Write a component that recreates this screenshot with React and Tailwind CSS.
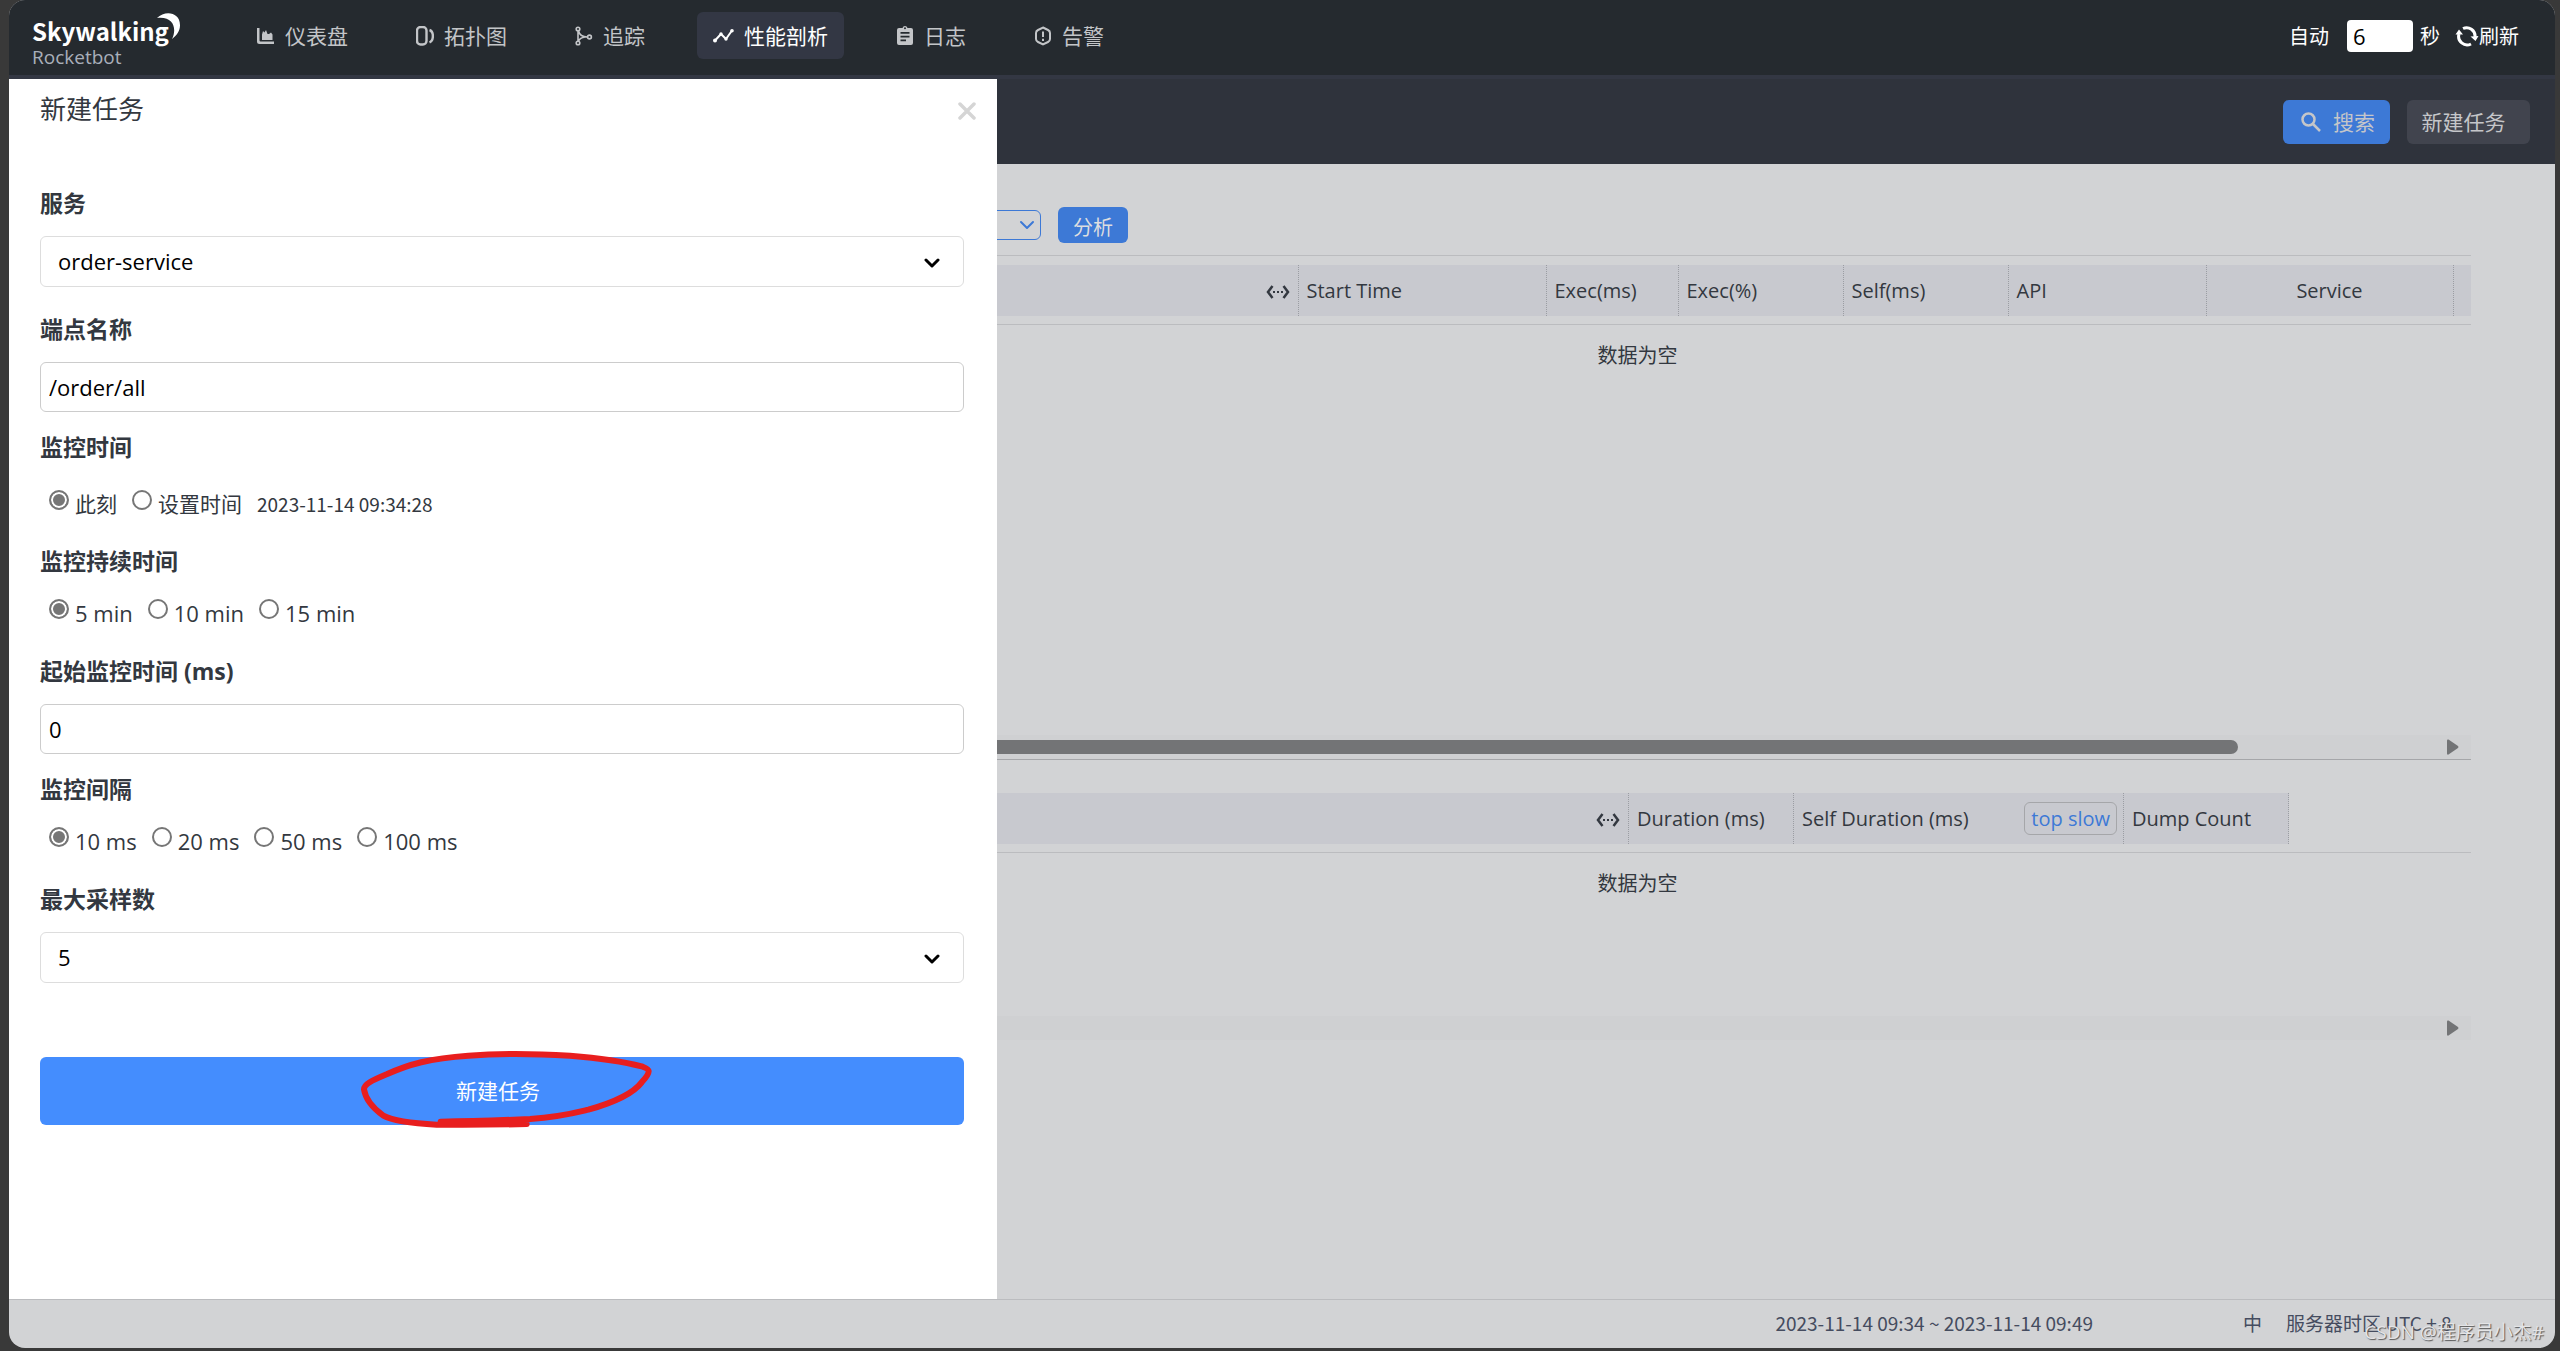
import React from "react";

function NavIcon({ name }) {
  const common = { viewBox: "0 0 18 20", className: "h-5 w-[18px] shrink-0", fill: "none", stroke: "currentColor", strokeWidth: 2 };
  switch (name) {
    case "dashboard":
      return (
        <svg {...common} fill="currentColor" stroke="none">
          <path d="M0 2h2.5v12.500q0 1 1 1H17V18H2.500Q0 18 0 15.500zM5 8.500 6 5l1.500 1.500L9 4l1.500 4L12 8l2-1.500 1.500 2V14H5z" />
        </svg>
      );
    case "topology":
      return (
        <svg {...common}>
          <rect x="1" y="1" width="9.500" height="17.500" rx="3.500" strokeWidth="2.400" />
          <path d="M13.500 4c4.500 1.500 4.500 10.500 0 12.500" strokeWidth="2.400" />
        </svg>
      );
    case "trace":
      return (
        <svg {...common} strokeWidth="1.600">
          <circle cx="3" cy="3" r="1.800" />
          <circle cx="3" cy="17" r="1.800" />
          <circle cx="14.500" cy="11" r="1.900" />
          <path d="M3 5v10M3.500 5c1 4.500 4 6 9 6M3.500 15c1-2 3-3.500 6-3.800" />
        </svg>
      );
    case "profile":
      return (
        <svg viewBox="0 0 21 20" className="h-5 w-[21px] shrink-0" fill="none" stroke="currentColor" strokeWidth="2">
          <path d="m2 14.500 6-6.500 5 5 6-8.500" strokeLinejoin="round" />
          <circle cx="2" cy="14.500" r="1" /><circle cx="8" cy="8" r=".7" /><circle cx="13" cy="13" r=".7" /><circle cx="19" cy="4.800" r=".8" />
        </svg>
      );
    case "log":
      return (
        <svg {...common} fill="currentColor" stroke="none">
          <path fillRule="evenodd" d="M3 2h3.500a2.600 2.600 0 0 1 5 0H15q2 0 2 2v13q0 2-2 2H3q-2 0-2-2V4q0-2 2-2zm6-.8a1 1 0 1 0 0 2 1 1 0 0 0 0-2zM4.500 6v1.700h9V6zm0 3.800v1.700h9V9.800zm0 3.800v1.700H10v-1.700z" />
        </svg>
      );
    default:
      return (
        <svg {...common}>
          <path d="M9 1.500 14 4q2 1 2 3v6q0 2-2 3l-5 2.500L4 16q-2-1-2-3V7q0-2 2-3z" />
          <path d="M9 5.500v5.500M9 12.800v2.200" />
        </svg>
      );
  }
}

function Chevron({ className, strokeWidth }) {
  return (
    <svg viewBox="0 0 16 10" className={className} fill="none" stroke="currentColor" strokeWidth={strokeWidth} strokeLinecap="round" strokeLinejoin="round">
      <path d="m2 2 6 6 6-6" />
    </svg>
  );
}

const NAV = [
  ["dashboard", "仪表盘"],
  ["topology", "拓扑图"],
  ["trace", "追踪"],
  ["profile", "性能剖析"],
  ["log", "日志"],
  ["alarm", "告警"],
];

function Header() {
  return (
    <header className="flex h-[75px] items-start justify-between bg-[#252a2f] pl-[23px] pr-9">
      <div className="flex">
        <div className="w-[209px] pt-[13px]">
          <div className="flex text-2xl leading-9 font-bold text-white">
            <span className="font-['Noto_Sans_CJK_SC',sans-serif]">Skywalking</span>
            <svg viewBox="0 0 23 26" className="-ml-3 h-[26px] w-[23px]" fill="currentColor">
              <path d="M0 5C8-3 23-1 23 12c0 6-3 10-8 14C20 16 17 3 0 5z" />
            </svg>
          </div>
          <div className="-mt-0.5 text-[19px] leading-5 text-[#a9afba]">Rocketbot</div>
        </div>
        <nav className="flex gap-9 pt-3">
          {NAV.map(([icon, label]) => (
            <a
              key={icon}
              href={"#" + icon}
              className={
                "flex h-[47px] items-center gap-2.5 rounded-md px-4 text-[21px] " +
                (icon === "profile" ? "bg-[#333744] text-white" : "text-[#c3c5c8]")
              }
            >
              <NavIcon name={icon} />
              <span className="pt-0.5">{label}</span>
            </a>
          ))}
        </nav>
      </div>
      <div className="flex h-[72px] items-center text-xl text-white">
        <label htmlFor="auto" className="pt-0.5">自动</label>
        <input id="auto" defaultValue="6" className="ml-[18px] mr-[7px] h-8 w-[66px] rounded-sm bg-white px-1.5 text-[22px] text-black" />
        <span className="pt-0.5">秒</span>
        <button className="ml-[15px] flex items-center">
          <svg viewBox="0 0 24 22" className="h-[22px] w-6" fill="none" stroke="currentColor" strokeWidth="3">
            <path d="M8 3.500a8.500 8.500 0 0 1 12 8.500M16 19A8.500 8.500 0 0 1 4 9" />
            <path d="m15.500 11.500 8-.5-3 5zM.5 9.500 4 4.500l4 5z" fill="currentColor" stroke="none" />
          </svg>
          <span className="pt-0.5">刷新</span>
        </button>
      </div>
    </header>
  );
}

function Field({ label, id, className, children }) {
  return (
    <div className={className}>
      <label htmlFor={id} className="block text-[23px] leading-[30px] font-bold">{label}</label>
      {children}
    </div>
  );
}

function Select({ id, value }) {
  return (
    <div className="relative mt-[18px]">
      <select id={id} className="h-[51px] w-full appearance-none rounded-md border border-[#dddddd] bg-white px-[17px] text-[22px] text-black">
        <option>{value}</option>
      </select>
      <Chevron className="pointer-events-none absolute right-6 top-[22px] h-2.5 w-4 text-black" strokeWidth="3" />
    </div>
  );
}

function TextInput({ id, value }) {
  return <input id={id} defaultValue={value} className="mt-[18px] block h-[50px] w-full rounded-md border border-[#cccccc] bg-white px-2 text-[22px] text-black" />;
}

function Radios({ label, name, options, className, groupClass, extra }) {
  return (
    <fieldset className={groupClass}>
      <legend className="text-[23px] leading-[30px] font-bold">{label}</legend>
      <div className={"flex gap-[15px] pl-[9px] leading-[30px] " + className}>
        {options.map((o, i) => (
          <label key={o} className="flex items-start gap-1.5">
            <input type="radio" name={name} defaultChecked={i === 0} className="mt-px h-5 w-5 appearance-none rounded-full border-2 border-[#767676] bg-white checked:bg-[#767676] checked:shadow-[inset_0_0_0_2px_white]" />
            {o}
          </label>
        ))}
        {extra}
      </div>
    </fieldset>
  );
}

function Drawer() {
  return (
    <section className="absolute inset-y-0 left-0 w-[988px] bg-white pl-[31px] pr-[33px] pt-[15px] text-[#333840]">
      <div className="flex h-[30px] items-center justify-between">
        <h2 className="text-[26px]">新建任务</h2>
        <button aria-label="关闭" className="-mr-3.5 p-0.5 pt-1.5 text-[#d5d5d5]">
          <svg viewBox="0 0 18 18" className="h-[18px] w-[18px]" fill="none" stroke="currentColor" strokeWidth="3.500" strokeLinecap="round">
            <path d="m2 2 14 14m0-14-14 14" />
          </svg>
        </button>
      </div>
      <form onSubmit={(e) => e.preventDefault()}>
        <Field label="服务" id="service" className="mt-16">
          <Select id="service" value="order-service" />
        </Field>
        <Field label="端点名称" id="endpoint" className="mt-[27px]">
          <TextInput id="endpoint" value="/order/all" />
        </Field>
        <Radios
          label="监控时间"
          name="time"
          options={["此刻", "设置时间"]}
          groupClass="mt-5"
          className="mt-[27px] text-[21px]"
          extra={<span className="font-['Noto_Sans_CJK_SC',sans-serif] text-[19px]">2023-11-14 09:34:28</span>}
        />
        <Radios label="监控持续时间" name="duration" options={["5 min", "10 min", "15 min"]} groupClass="mt-[27px]" className="mt-[22px] text-[22px]" />
        <Field label="起始监控时间 (ms)" id="start" className="mt-7">
          <TextInput id="start" value="0" />
        </Field>
        <Radios label="监控间隔" name="interval" options={["10 ms", "20 ms", "50 ms", "100 ms"]} groupClass="mt-5" className="mt-[22px] text-[22px]" />
        <Field label="最大采样数" id="samples" className="mt-7">
          <Select id="samples" value="5" />
        </Field>
        <div className="relative mt-[74px]">
          <button className="h-[68px] w-full rounded-md bg-[#448dfe] pt-0.5 pr-2 text-[21px] text-white">新建任务</button>
          <svg viewBox="0 0 1020 330" className="pointer-events-none absolute -top-[27px] left-[300px] h-[110px] w-[340px]" fill="none" stroke="#e81e1e" strokeWidth="18" strokeLinecap="round" strokeLinejoin="round">
            <path d="M302 275C400 274 480 271 570 267 660 261 700 250 745 239 830 215 880 190 905 157 940 118 925 117 905 109 860 97 790 85 690 77 590 71 460 71 385 77 270 85 205 103 140 133 95 152 72 162 72 178 76 205 100 235 130 257 155 271 210 280 290 284 400 285 480 284 560 282" />
          </svg>
        </div>
      </form>
    </section>
  );
}

function ResizeIcon() {
  return (
    <svg viewBox="0 0 24 14" className="ml-auto mr-2 mt-0.5 h-3.5 w-6" fill="none" stroke="currentColor" strokeWidth="2.500">
      <path d="M6.500 1 2 7l4.500 6M17.500 1 22 7l-4.500 6" />
      <path d="M7 7h10" strokeWidth="2" strokeDasharray="2 2" />
    </svg>
  );
}

const TH = "border-r border-dotted border-[#9b9da3] pl-2 pr-1.5 text-left font-normal";

function ScrollArrow() {
  return (
    <svg viewBox="0 0 12 16" className="mr-3 h-4 w-3" fill="#737476">
      <path d="M0 1.500Q0 0 1.500.500L11 7q1 1 0 2l-9.500 6.500Q0 16 0 14.500z" />
    </svg>
  );
}

function Workspace() {
  return (
    <main className="flex-1 bg-[#d2d3d5] pl-[795px] pr-[84px] pt-[43px] text-xl text-[#333840]">
      <div className="flex h-9 items-center gap-[17px]">
        <div className="relative w-[237px]">
          <select aria-label="Span" className="block h-[30px] w-full appearance-none rounded-md border border-[#3d79d6] bg-[#d2d3d5]" />
          <Chevron className="pointer-events-none absolute right-1.5 top-2.5 h-2.5 w-4 text-[#3d79d6]" strokeWidth="2" />
        </div>
        <button className="h-9 w-[70px] rounded-md bg-[#3d79d6] pt-1.5 text-xl text-[#dcdde0]">分析</button>
      </div>
      <div className="mt-3 h-[505px] border-y border-t-[#bbbcbf] border-b-[#a5a6a9] pt-[9px]">
        <div className="flex h-full flex-col">
          <table className="w-full table-fixed border-collapse">
            <colgroup>
              <col />
              <col className="w-[248px]" />
              <col className="w-[132px]" />
              <col className="w-[165px]" />
              <col className="w-[165px]" />
              <col className="w-[198px]" />
              <col className="w-[247px]" />
              <col className="w-[18px]" />
            </colgroup>
            <thead>
              <tr className="h-[51px] bg-[#c8c9cf]">
                <th aria-label="Span" className="border-r border-dotted border-[#9b9da3]"><ResizeIcon /></th>
                {["Start Time", "Exec(ms)", "Exec(%)", "Self(ms)", "API"].map((t) => (
                  <th key={t} className={TH}>{t}</th>
                ))}
                <th className="border-r border-dotted border-[#9b9da3] font-normal">Service</th>
                <th aria-hidden="true" />
              </tr>
            </thead>
          </table>
          <p className="mt-2 border-t border-[#bbbcbf] pt-4 text-center leading-[30px]">数据为空</p>
          <div className="mt-auto flex h-6 items-center justify-between bg-[#cfd0d2]">
            <div className="h-3.5 w-[86%] rounded-full bg-[#737476]" />
            <ScrollArrow />
          </div>
        </div>
      </div>
      <div className="mt-[33px] flex h-[247px] flex-col">
        <div className="w-[1485px]">
          <table className="w-full table-fixed border-collapse">
            <colgroup>
              <col />
              <col className="w-[165px]" />
              <col className="w-[330px]" />
              <col className="w-[165px]" />
            </colgroup>
            <thead>
              <tr className="h-[51px] bg-[#c8c9cf]">
                <th aria-label="Span" className="border-r border-dotted border-[#9b9da3]"><ResizeIcon /></th>
                <th className={TH}>Duration (ms)</th>
                <th className={TH}>
                  <div className="flex items-center justify-between">
                    Self Duration (ms)
                    <button className="h-[33px] rounded-md border border-[#a5a6a9] px-1.5 leading-7 text-[#3d79d6]">top slow</button>
                  </div>
                </th>
                <th className={TH}>Dump Count</th>
              </tr>
            </thead>
          </table>
        </div>
        <p className="mt-2 border-t border-[#bbbcbf] pt-4 text-center leading-[30px]">数据为空</p>
        <div className="mt-auto flex h-6 items-center justify-end bg-[#cfd0d2]">
          <ScrollArrow />
        </div>
      </div>
    </main>
  );
}

export default function App() {
  return (
    <div className="flex min-h-screen flex-col bg-[#393939] pb-[3px] pl-[9px] pr-[5px] font-['Open_Sans','Noto_Sans_CJK_SC',sans-serif]">
      <div className="relative flex flex-1 flex-col overflow-hidden rounded-2xl bg-[#d2d3d5]">
        <Header />
        <div className="h-1 bg-[#333743]" />
        <div className="relative flex flex-1 flex-col">
          <div className="flex h-[85px] items-center justify-end gap-[17px] bg-[#2f333c] pr-[25px] text-[21px] text-[#c5c6c9]">
            <button className="flex h-11 items-center gap-3 rounded-md bg-[#3d79d6] pl-[18px] pr-[15px]">
              <svg viewBox="0 0 20 20" className="h-5 w-5" fill="none" stroke="currentColor" strokeWidth="2.500">
                <circle cx="7.500" cy="7.500" r="6" />
                <path d="m12 12 7 7" />
              </svg>
              <span className="pt-0.5">搜索</span>
            </button>
            <button className="h-11 w-[123px] rounded-md bg-[#41444e] pt-0.5 pr-2.5">新建任务</button>
          </div>
          <Workspace />
          <Drawer />
        </div>
        <footer className="flex h-[49px] items-center justify-end border-t border-[#bbbcbf] pr-[91px] pb-0.5 font-['Noto_Sans_CJK_SC',sans-serif] text-[19px] text-[#454c5f]">
          <span>2023-11-14 09:34 ~ 2023-11-14 09:49</span>
          <button className="ml-[150px]">中</button>
          <span className="ml-6 w-[178px] whitespace-nowrap">服务器时区 UTC + 8</span>
        </footer>
        <span className="absolute bottom-1 right-[11px] text-[19px] leading-6 text-[#e4e4e6] [text-shadow:1px_1px_1px_#555]">CSDN @程序员小杰#</span>
      </div>
    </div>
  );
}
